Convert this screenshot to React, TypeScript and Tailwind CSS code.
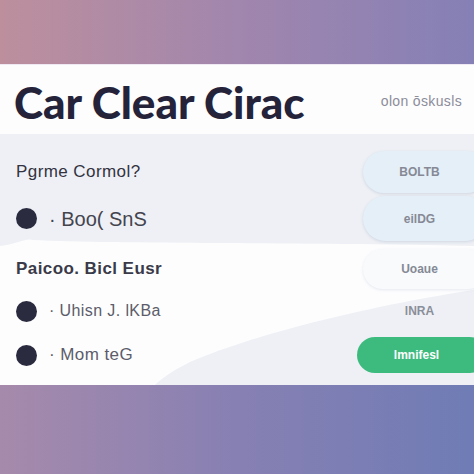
import React from 'react'

const dot = 'w-[21px] h-[21px] rounded-full bg-[#2b2b40] shrink-0'

function Pill({ label, tone }: { label: string; tone: 'blue' | 'white' | 'none' | 'green' }) {
  const styles = {
    blue: 'bg-[#e5eff7] shadow-[0_1px_3px_rgba(120,140,170,0.25)] text-[#858995] w-[125px]',
    white: 'bg-[#f8fafc] shadow-[0_1px_3px_rgba(120,140,170,0.18)] text-[#858995] w-[125px]',
    none: 'text-[#8a8e99] w-[125px]',
    green: 'bg-[#3dbb7e] text-white w-[131px]',
  }[tone]
  return (
    <div className={`h-full mr-[-14px] rounded-full flex items-center justify-center pr-3 text-[12px] font-bold ${styles}`}>
      {label}
    </div>
  )
}

export default function App() {
  return (
    <div className="w-[474px] h-[474px] flex flex-col overflow-hidden" style={{ fontFamily: '"Liberation Sans", Arial, sans-serif' }}>
      {/* top band */}
      <div className="h-16 bg-gradient-to-r from-[#bd8f9d] via-[#a186ad] to-[#8580b6]" />

      {/* card */}
      <div className="bg-white border-t border-[#efe9f3]">
        <div className="h-[69px] flex items-center justify-between pl-[14px] pr-3 bg-[#fdfdfe]">
          <h1 className="text-[44px] font-black text-[#24233a] leading-none pt-1" style={{ fontFamily: 'Lato, sans-serif' }}>
            Car Clear Cirac
          </h1>
          <span className="text-[14px] tracking-wide text-[#8c8c9a] pt-1">olon ōskusls</span>
        </div>

        <div className="relative h-[251px] bg-[#eef0f5] overflow-hidden">
          <svg className="absolute inset-0" width="474" height="251" viewBox="0 0 474 251">
            <path
              d="M0 112 C 18 110 26 104 32 106 C 120 110 300 108 474 112 L474 156 C 380 170 260 198 190 228 C 170 238 160 246 155 251 L0 251 Z"
              fill="#fdfdfe"
            />
          </svg>

          <div className="relative flex flex-col pt-[17px] pl-4">
            <div className="h-[42px] flex items-center justify-between">
              <span className="text-[17px] font-medium tracking-wide text-[#33333f]">Pgrme Cormol?</span>
              <Pill label="BOLTB" tone="blue" />
            </div>
            <div className="h-[45px] mt-[3px] flex items-center justify-between">
              <div className="flex items-center gap-3">
                <span className={dot} />
                <span className="text-[20px] text-[#44444f]">· Boo( SnS</span>
              </div>
              <Pill label="eilDG" tone="blue" />
            </div>
            <div className="h-10 mt-2 flex items-center justify-between">
              <span className="text-[17px] font-bold tracking-wide text-[#3a3a48]">Paicoo. Bicl Eusr</span>
              <Pill label="Uoaue" tone="white" />
            </div>
            <div className="h-11 flex items-center justify-between">
              <div className="flex items-center gap-3">
                <span className={dot} />
                <span className="text-[16px] tracking-wide text-[#5c5c6a]">· Uhisn J. lKBa</span>
              </div>
              <Pill label="lNRA" tone="none" />
            </div>
            <div className="h-9 mt-1 flex items-center justify-between">
              <div className="flex items-center gap-3">
                <span className={dot} />
                <span className="text-[17px] tracking-wide text-[#5c5c6a]">· Mom teG</span>
              </div>
              <Pill label="lmnifesl" tone="green" />
            </div>
          </div>
        </div>
      </div>

      {/* bottom band */}
      <div className="flex-1 bg-gradient-to-r from-[#a68aab] via-[#8780b3] to-[#6f7cb5]" />
    </div>
  )
}
